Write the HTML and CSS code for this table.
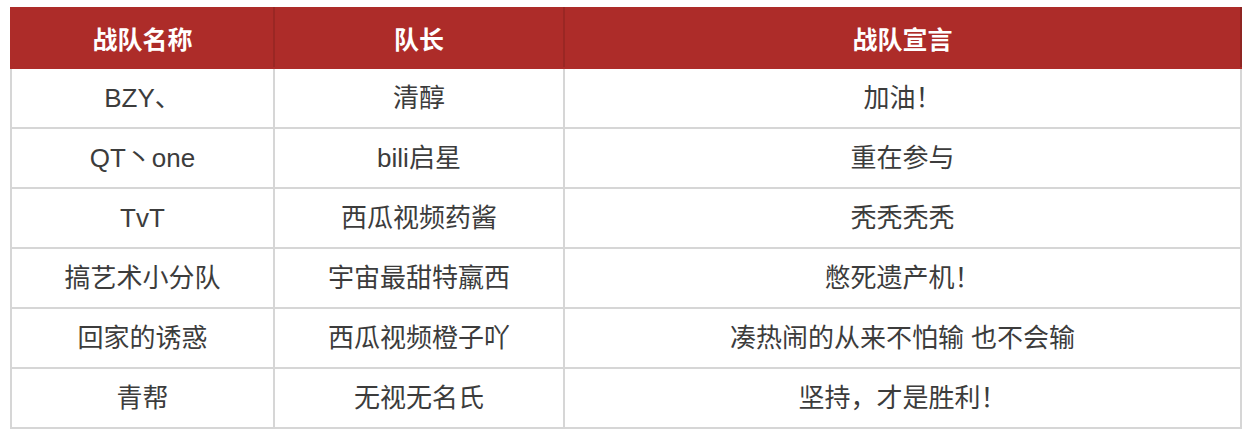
FILE: index.html
```html
<!DOCTYPE html>
<html lang="zh-CN">
<head>
<meta charset="utf-8">
<title>战队</title>
<link rel="stylesheet" href="styles.css">
</head>
<body>
<table class="teams">
  <colgroup>
    <col class="c1"><col class="c2"><col class="c3">
  </colgroup>
  <thead>
    <tr><th>战队名称</th><th>队长</th><th>战队宣言</th></tr>
  </thead>
  <tbody>
    <tr><td>BZY、</td><td>清醇</td><td>加油！</td></tr>
    <tr><td>QT丶one</td><td>bili启星</td><td>重在参与</td></tr>
    <tr><td>TvT</td><td>西瓜视频药酱</td><td>秃秃秃秃</td></tr>
    <tr><td>搞艺术小分队</td><td>宇宙最甜特羸西</td><td>憋死遗产机！</td></tr>
    <tr><td>回家的诱惑</td><td>西瓜视频橙子吖</td><td>凑热闹的从来不怕输 也不会输</td></tr>
    <tr><td>青帮</td><td>无视无名氏</td><td>坚持，才是胜利！</td></tr>
  </tbody>
</table>
</body>
</html>
```
FILE: styles.css
```css
html, body {
  margin: 0;
  padding: 0;
  background: #ffffff;
}
body {
  padding: 7px 10px 0 10px;
  font-family: "Liberation Sans", "Noto Sans CJK SC", sans-serif;
}
.teams {
  width: 1232px;
  border-collapse: collapse;
  table-layout: fixed;
}
.c1 { width: 263px; }
.c2 { width: 290px; }
.c3 { width: auto; }
.teams th {
  height: 58px;
  background: #ad2c29;
  color: #ffffff;
  font-family: "Noto Sans CJK SC", sans-serif;
  font-size: 25px;
  font-weight: 700;
  line-height: 30px;
  text-align: center;
  border: 2px solid #ad2c29;
  border-left: 2px solid #9a2724;
  border-right: 2px solid #9a2724;
  padding: 0;
}
.teams th:first-child { border-left-color: #ad2c29; }
.teams th:last-child { border-right-color: #8f2522; }
.teams td {
  height: 58px;
  padding: 0;
  text-align: center;
  font-size: 26px;
  line-height: 30px;
  color: #3c3c3c;
  border: 2px solid #d6d6d6;
}
```
